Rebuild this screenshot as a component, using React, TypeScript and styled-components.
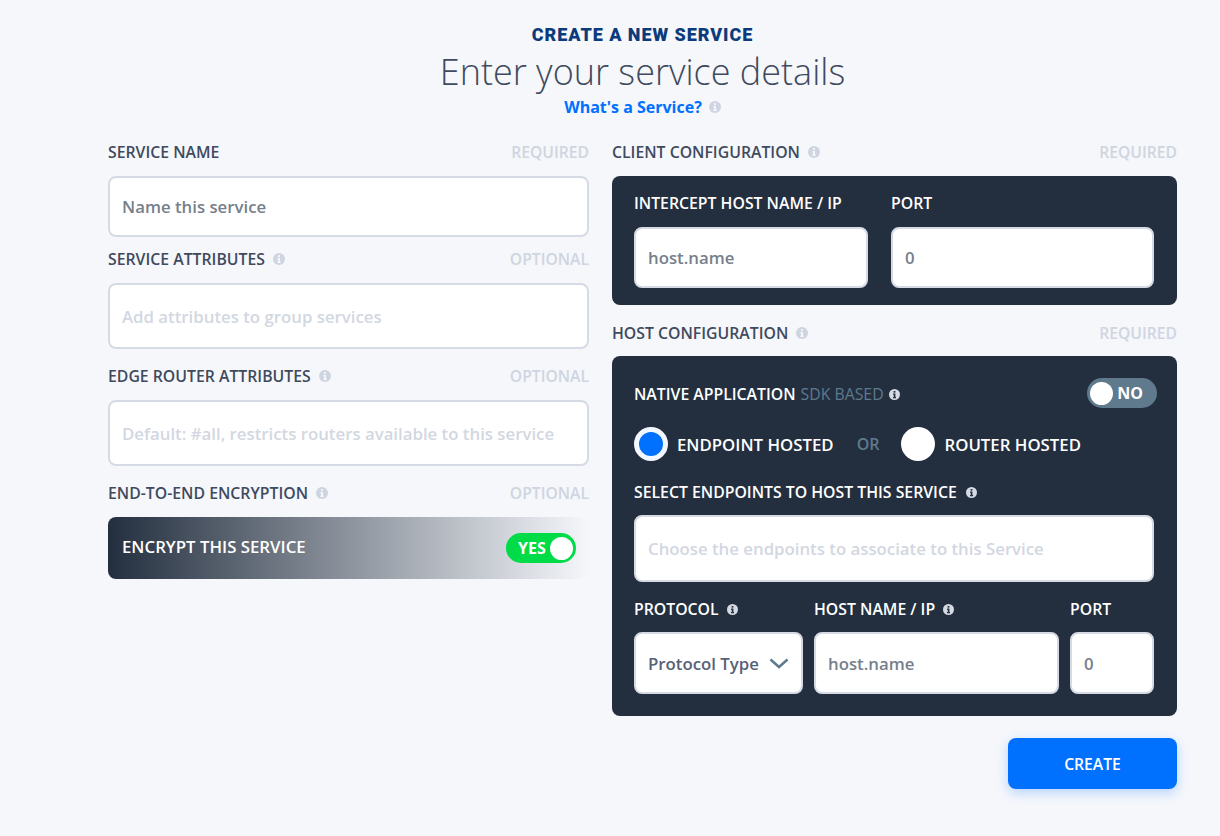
import React from 'react';
import styled, { createGlobalStyle } from 'styled-components';

const GlobalStyle = createGlobalStyle`
   html, body {
      margin: 0;
      padding: 0;
      background: #f5f7fb;
      font-family: "Open Sans", "Liberation Sans", sans-serif;
   }
   * { box-sizing: border-box; }
`;

const InfoIcon = ({ dark, size = 12 }: { dark?: boolean; size?: number }) => (
   <InfoSvg viewBox="0 0 12 12" width={size} height={size}>
      <circle cx="6" cy="6" r="6" fill={dark ? '#d5dae3' : '#cfd5e0'} />
      <g fill={dark ? '#232f3f' : '#f5f7fb'}>
         <rect x="5" y="2.200" width="2" height="1.800" />
         <path d="M4.400 5h2.600v3.600h.7V10H4.400V8.600h.8V6.400h-.8z" />
      </g>
   </InfoSvg>
);

type LabelRowProps = {
   text: string;
   info?: boolean;
   tag: string;
   top: number;
   bottom?: number;
};

const LabelRow = ({ text, info, tag, top, bottom = 12 }: LabelRowProps) => (
   <StyledLabelRow $top={top} $bottom={bottom}>
      <FieldLabel>
         {text}
         {info && <InfoIcon />}
      </FieldLabel>
      <Tag>{tag}</Tag>
   </StyledLabelRow>
);

export default function App() {
   return (
      <Page>
         <GlobalStyle />
         <Header>
            <Eyebrow>CREATE A NEW SERVICE</Eyebrow>
            <Title>Enter your service details</Title>
            <HelpLink>
               What's a Service? <InfoIcon />
            </HelpLink>
         </Header>

         <Columns>
            <Column>
               <LabelRow text="SERVICE NAME" tag="REQUIRED" top={0} />
               <TextInput $height={61} $placeholder="dark">Name this service</TextInput>
               <LabelRow text="SERVICE ATTRIBUTES" info tag="OPTIONAL" top={10} />
               <TextInput $height={66}>Add attributes to group services</TextInput>
               <LabelRow text="EDGE ROUTER ATTRIBUTES" info tag="OPTIONAL" top={15} />
               <TextInput $height={66}>Default: #all, restricts routers available to this service</TextInput>
               <LabelRow text="END-TO-END ENCRYPTION" info tag="OPTIONAL" top={15} />
               <EncryptBar>
                  <EncryptText>ENCRYPT THIS SERVICE</EncryptText>
                  <Toggle $on>
                     YES
                     <Knob />
                  </Toggle>
               </EncryptBar>
            </Column>

            <Column>
               <LabelRow text="CLIENT CONFIGURATION" info tag="REQUIRED" top={0} />
               <ClientPanel>
                  <PanelField>
                     <PanelLabel>INTERCEPT HOST NAME / IP</PanelLabel>
                     <TextInput $height={61} $placeholder="dark">host.name</TextInput>
                  </PanelField>
                  <PanelField>
                     <PanelLabel>PORT</PanelLabel>
                     <TextInput $height={61} $placeholder="dark">0</TextInput>
                  </PanelField>
               </ClientPanel>

               <LabelRow text="HOST CONFIGURATION" info tag="REQUIRED" top={16} bottom={11} />
               <HostPanel>
                  <NativeRow>
                     <PanelLabel>
                        NATIVE APPLICATION <Muted>SDK BASED</Muted>
                        <InfoIcon dark size={11} />
                     </PanelLabel>
                     <Toggle>
                        <Knob />
                        NO
                     </Toggle>
                  </NativeRow>
                  <RadioRow>
                     <RadioOption>
                        <Radio $selected />
                        ENDPOINT HOSTED
                     </RadioOption>
                     <OrText>OR</OrText>
                     <RadioOption>
                        <Radio />
                        ROUTER HOSTED
                     </RadioOption>
                  </RadioRow>
                  <SelectLabel>
                     SELECT ENDPOINTS TO HOST THIS SERVICE
                     <InfoIcon dark size={11} />
                  </SelectLabel>
                  <TextInput $height={67}>Choose the endpoints to associate to this Service</TextInput>
                  <ProtocolGrid>
                     <PanelField>
                        <PanelLabel>
                           PROTOCOL
                           <InfoIcon dark size={11} />
                        </PanelLabel>
                        <SelectBox>
                           Protocol Type
                           <svg width="20" height="11" viewBox="0 0 20 11">
                              <path d="M1.500 1.500 10 9l8.500-7.500" fill="none" stroke="#5f7a8c" strokeWidth="2.500" />
                           </svg>
                        </SelectBox>
                     </PanelField>
                     <PanelField>
                        <PanelLabel>
                           HOST NAME / IP
                           <InfoIcon dark size={11} />
                        </PanelLabel>
                        <TextInput $height={62} $placeholder="dark">host.name</TextInput>
                     </PanelField>
                     <PanelField>
                        <PanelLabel>PORT</PanelLabel>
                        <TextInput $height={62} $placeholder="dark">0</TextInput>
                     </PanelField>
                  </ProtocolGrid>
               </HostPanel>
               <Actions>
                  <CreateButton>CREATE</CreateButton>
               </Actions>
            </Column>
         </Columns>
      </Page>
   );
}

const Page = styled.div`
   width: 100%;
   min-height: 836px;
   background: #f5f7fb;
   padding: 25px 43px 0 108px;
`;

const Header = styled.div`
   display: flex;
   flex-direction: column;
   align-items: center;
`;

const Eyebrow = styled.div`
   font-family: "Roboto", sans-serif;
   font-size: 18px;
   font-weight: 900;
   line-height: 20px;
   letter-spacing: 0.95px;
   color: #0c3b7c;
`;

const Title = styled.h1`
   margin: 3px 0 0;
   font-size: 36px;
   font-weight: 300;
   line-height: 48px;
   color: #3f4a5e;
`;

const HelpLink = styled.div`
   display: flex;
   align-items: center;
   gap: 7px;
   font-size: 16px;
   font-weight: 700;
   line-height: 22px;
   color: #0070ff;
`;

const Columns = styled.div`
   display: grid;
   grid-template-columns: 481px 565px;
   gap: 23px;
   margin-top: 22px;
`;

const Column = styled.div`
   display: flex;
   flex-direction: column;
   min-width: 0;
`;

const StyledLabelRow = styled.div<{ $top: number; $bottom: number }>`
   display: flex;
   align-items: center;
   justify-content: space-between;
   height: 24px;
   margin-top: ${(p) => p.$top}px;
   margin-bottom: ${(p) => p.$bottom}px;
`;

const FieldLabel = styled.div`
   display: flex;
   align-items: center;
   gap: 8px;
   font-size: 15.800px;
   font-weight: 600;
   color: #3f4a5e;
`;

const Tag = styled.div`
   font-size: 15.700px;
   font-weight: 600;
   color: #cfd5e0;
`;

const TextInput = styled.div<{ $height: number; $placeholder?: string }>`
   display: flex;
   align-items: center;
   width: 100%;
   height: ${(p) => p.$height}px;
   padding: 0 12px;
   background: #fff;
   border: 2px solid #d5dae5;
   border-radius: 8px;
   font-size: 16.800px;
   font-weight: 600;
   white-space: nowrap;
   overflow: hidden;
   color: ${(p) => (p.$placeholder === 'dark' ? '#767f8b' : '#d2d7e1')};
`;

const EncryptBar = styled.div`
   display: flex;
   align-items: center;
   justify-content: space-between;
   height: 62px;
   padding: 0 13px 0 14px;
   border-radius: 8px;
   background: linear-gradient(90deg, #232f3f 0%, rgba(35, 47, 63, 0) 100%);
`;

const EncryptText = styled.span`
   margin-bottom: 4px;
   font-size: 16.800px;
   font-weight: 600;
   color: #fff;
`;

const Toggle = styled.div<{ $on?: boolean }>`
   display: flex;
   align-items: center;
   justify-content: space-between;
   flex-shrink: 0;
   width: 70px;
   height: 30px;
   padding: 0 ${(p) => (p.$on ? 3 : 14)}px 0 ${(p) => (p.$on ? 12 : 3)}px;
   border-radius: 15px;
   background: ${(p) => (p.$on ? '#00dc47' : '#5f7a8c')};
   font-size: 16px;
   font-weight: 700;
   color: #fff;
`;

const Knob = styled.span`
   display: block;
   width: 23px;
   height: 23px;
   border-radius: 50%;
   background: #fff;
`;

const DarkPanel = styled.div`
   background: #232f3f;
   border-radius: 8px;
`;

const ClientPanel = styled(DarkPanel)`
   display: grid;
   grid-template-columns: 234px 263px;
   gap: 23px;
   height: 129px;
   padding: 15px 23px 0 22px;
`;

const PanelField = styled.div`
   display: flex;
   flex-direction: column;
   min-width: 0;
`;

const PanelLabel = styled.div`
   display: flex;
   align-items: center;
   gap: 5px;
   min-height: 24px;
   margin-bottom: 12px;
   font-size: 15.800px;
   font-weight: 600;
   color: #fff;
`;

const SelectLabel = styled(PanelLabel)`
   gap: 9px;
   margin-bottom: 11px;
`;

const Muted = styled.span`
   font-weight: 400;
   color: #5f7a8c;
`;

const HostPanel = styled(DarkPanel)`
   display: flex;
   flex-direction: column;
   height: 360px;
   padding: 22px 23px 0 22px;
`;

const NativeRow = styled.div`
   display: flex;
   justify-content: space-between;
   align-items: flex-start;
   height: 49px;
   margin-right: -3px;
   & > ${PanelLabel} { margin: 4px 0 0; }
`;

const RadioRow = styled.div`
   display: flex;
   align-items: center;
   height: 34px;
   margin-bottom: 19px;
`;

const RadioOption = styled.div`
   display: flex;
   align-items: center;
   gap: 9px;
   font-size: 16.800px;
   font-weight: 600;
   color: #fff;
`;

const Radio = styled.span<{ $selected?: boolean }>`
   display: block;
   width: 34px;
   height: 34px;
   border-radius: 50%;
   background: ${(p) => (p.$selected ? '#0070ff' : '#fff')};
   border: ${(p) => (p.$selected ? '5px solid #f3f7ff' : 'none')};
`;

const OrText = styled.span`
   margin: 0 22px 0 23px;
   font-size: 16px;
   font-weight: 600;
   color: #5f7a8c;
`;

const ProtocolGrid = styled.div`
   display: grid;
   grid-template-columns: 169px 245px 84px;
   gap: 11px;
   margin-top: 15px;
   & ${PanelLabel} { gap: 8px; margin-bottom: 11px; }
`;

const SelectBox = styled.div`
   display: flex;
   align-items: center;
   justify-content: space-between;
   height: 62px;
   padding: 0 12px;
   background: #fff;
   border: 2px solid #d5dae5;
   border-radius: 8px;
   font-size: 16.800px;
   font-weight: 600;
   white-space: nowrap;
   color: #566176;
`;

const Actions = styled.div`
   display: flex;
   justify-content: flex-end;
   margin-top: 22px;
`;

const CreateButton = styled.button`
   width: 169px;
   height: 51px;
   border: none;
   border-radius: 8px;
   background: #0070ff;
   box-shadow: 0 4px 12px rgba(0, 112, 255, 0.25);
   font-family: inherit;
   font-size: 15.700px;
   font-weight: 600;
   color: #fff;
`;

const InfoSvg = styled.svg`
   flex-shrink: 0;
`;
